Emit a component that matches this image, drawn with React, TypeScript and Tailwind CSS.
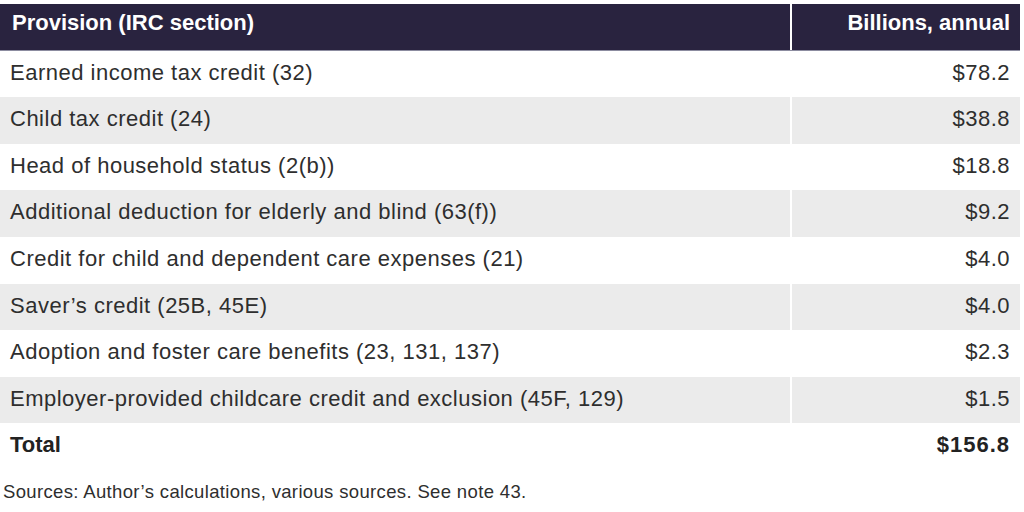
import React from "react";

const rows: [string, string, number][] = [
  ["Earned income tax credit (32)", "$78.2", 46],
  ["Child tax credit (24)", "$38.8", 47],
  ["Head of household status (2(b))", "$18.8", 46],
  ["Additional deduction for elderly and blind (63(f))", "$9.2", 47],
  ["Credit for child and dependent care expenses (21)", "$4.0", 47],
  ["Saver\u2019s credit (25B, 45E)", "$4.0", 46],
  ["Adoption and foster care benefits (23, 131, 137)", "$2.3", 47],
  ["Employer-provided childcare credit and exclusion (45F, 129)", "$1.5", 46],
];

const font = { fontFamily: '"Liberation Sans", Arial, sans-serif' };

export default function App() {
  return (
    <div className="w-[1024px] h-[512px] bg-white text-[#2e2e2e] overflow-hidden" style={font}>
      <div className="pt-[4px] w-[1020px]">
        <div className="flex h-[47px] bg-[#29233f] border-b border-[#8c8ca0] text-white font-bold text-[22px] pb-[9px]">
          <div className="w-[790px] flex items-center pl-[12px]">Provision (IRC section)</div>
          <div className="w-[2px] bg-white -mb-[9px]" />
          <div className="flex-1 flex items-center justify-end pr-[10px]">Billions, annual</div>
        </div>
        {rows.map(([label, val, h], i) => (
          <div key={label} className="flex text-[22px] tracking-[0.5px]" style={{ height: h }}>
            <div
              className={`w-[790px] flex items-center pl-[10px] pb-[4px] ${
                i % 2 === 1 ? "bg-[#ebebeb]" : "bg-white"
              }`}
            >
              {label}
            </div>
            <div className="w-[2px] bg-white" />
            <div
              className={`flex-1 flex items-center justify-end pr-[10px] pb-[4px] ${
                i % 2 === 1 ? "bg-[#ebebeb]" : "bg-white"
              }`}
            >
              {val}
            </div>
          </div>
        ))}
        <div className="flex h-[46px] text-[22px] font-bold text-[#222] pb-[4px]">
          <div className="w-[790px] flex items-center pl-[10px]">Total</div>
          <div className="w-[2px]" />
          <div className="flex-1 flex items-center justify-end pr-[10px] tracking-[1px]">$156.8</div>
        </div>
      </div>
      <div className="pl-[3px] pt-[9px] text-[18.5px] tracking-[0.35px] text-[#2e2e2e]">
        Sources: Author’s calculations, various sources. See note 43.
      </div>
    </div>
  );
}
